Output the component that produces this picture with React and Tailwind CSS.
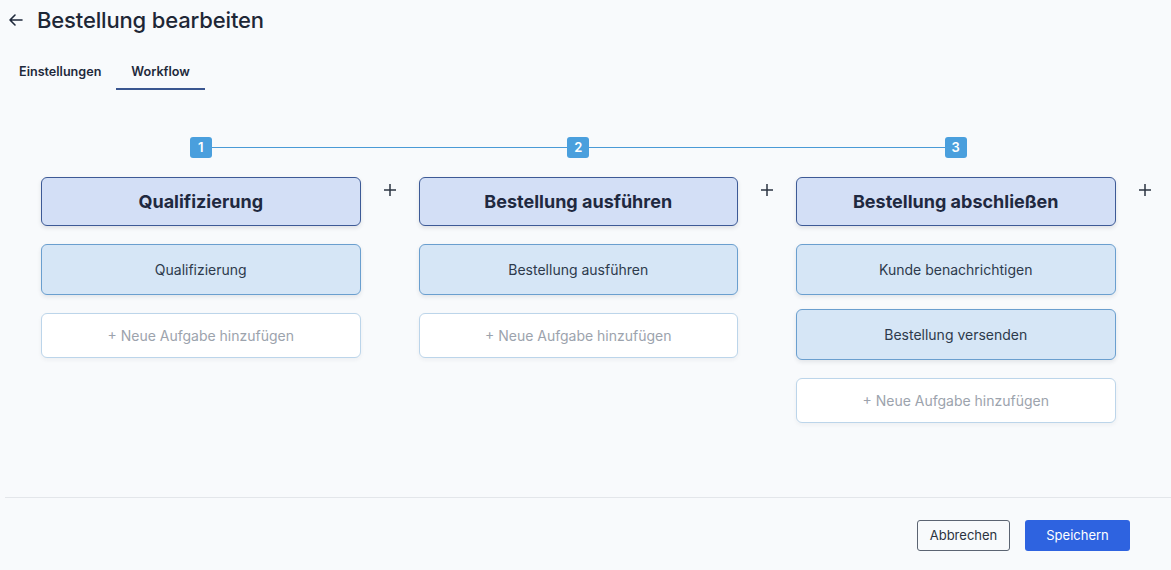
import { useState } from 'react';

const stages = [
  { name: 'Qualifizierung', tasks: ['Qualifizierung'] },
  { name: 'Bestellung ausführen', tasks: ['Bestellung ausführen'] },
  { name: 'Bestellung abschließen', tasks: ['Kunde benachrichtigen', 'Bestellung versenden'] },
];

function PlusIcon() {
  return (
    <svg className="w-[14px] h-[14px]" viewBox="0 0 14 14" fill="none" stroke="#2b3441" strokeWidth={1.5}>
      <path d="M7 1v12M1 7h12" />
    </svg>
  );
}

export default function App() {
  const [tab, setTab] = useState('workflow');

  return (
    <div
      className="w-[1171px] h-[570px] bg-[#f8fafc] overflow-hidden flex flex-col text-[#1e293b]"
      style={{ fontFamily: 'Inter, "Noto Sans", sans-serif' }}
    >
      {/* Header */}
      <div className="h-[40px] flex items-center gap-[14px] pl-[8px]">
        <svg className="w-[16px] h-[16px]" viewBox="0 0 16 16" fill="none" stroke="#1e293b" strokeWidth={1.6} strokeLinecap="round" strokeLinejoin="round">
          <path d="M14 8H2M7 3L2 8l5 5" />
        </svg>
        <h1 className="text-[22px] font-medium tracking-[-0.15px] text-[#1e2736] -ml-[1px]">Bestellung bearbeiten</h1>
      </div>

      {/* Tabs */}
      <div className="mt-[16px] pl-[4px] flex">
        <button
          onClick={() => setTab('settings')}
          className={`h-[34px] px-[15px] text-[12.6px] font-semibold text-[#1e293b] border-b-2 ${tab === 'settings' ? 'border-[#3a5690]' : 'border-transparent'}`}
        >
          Einstellungen
        </button>
        <button
          onClick={() => setTab('workflow')}
          className={`h-[34px] px-[15px] text-[12.6px] font-semibold text-[#1e293b] border-b-2 ${tab === 'workflow' ? 'border-[#3a5690]' : 'border-transparent'}`}
        >
          Workflow
        </button>
      </div>

      {/* Steps */}
      <div className="mt-[47px] pl-[41px] flex items-center">
        {stages.map((s, i) => (
          <div key={i} className="flex items-center">
            <div className="w-[319.5px] flex items-center">
              <div className={`flex-1 h-px ${i === 0 ? 'bg-transparent' : 'bg-[#4a9ad6]'}`} />
              <div className="w-[22px] h-[21px] rounded-[3px] bg-[#4a9fdd] text-white text-[13px] font-semibold flex items-center justify-center">
                {i + 1}
              </div>
              <div className={`flex-1 h-px ${i === stages.length - 1 ? 'bg-transparent' : 'bg-[#4a9ad6]'}`} />
            </div>
            <div className={`w-[58px] h-px ${i === stages.length - 1 ? 'bg-transparent' : 'bg-[#4a9ad6]'}`} />
          </div>
        ))}
      </div>

      {/* Columns */}
      <div className="mt-[19px] pl-[41px] flex items-start">
        {stages.map((s, i) => (
          <div key={i} className="flex items-start">
            <div className="w-[319.5px] flex flex-col">
              <div className="h-[49px] rounded-[6px] border border-[#3d5a96] bg-[#d3dff6] shadow-[0_2px_4px_rgba(30,41,59,0.12)] flex items-center justify-center text-[18px] font-bold text-[#1f2940]">
                {s.name}
              </div>
              <div className="mt-[18px] flex flex-col gap-[14px]">
                {s.tasks.map((t) => (
                  <div
                    key={t}
                    className="h-[51px] rounded-[6px] border border-[#6a9fcf] bg-[#d6e6f6] shadow-[0_2px_4px_rgba(30,41,59,0.10)] flex items-center justify-center text-[14px] text-[#2d3a4c]"
                  >
                    {t}
                  </div>
                ))}
              </div>
              <div className="mt-[18px] h-[45px] rounded-[6px] border border-[#bcd5ea] bg-white shadow-[0_2px_4px_rgba(30,41,59,0.05)] flex items-center justify-center text-[14px] text-[#9ca3ad]">
                + Neue Aufgabe hinzufügen
              </div>
            </div>
            <div className="w-[58px] flex justify-center pt-[6px]">
              <PlusIcon />
            </div>
          </div>
        ))}
      </div>

      <div className="flex-1" />

      {/* Footer */}
      <div className="ml-[5px] border-t border-[#e3e6ea] pt-[22px] pb-[19px] pr-[41px] flex justify-end gap-[15px]">
        <button className="w-[93px] h-[31px] rounded-[3px] border border-[#5b6472] bg-[#f8fafc] text-[13px] text-[#2b3340]">
          Abbrechen
        </button>
        <button className="w-[105px] h-[31px] rounded-[3px] bg-[#2e63e0] text-[13px] text-white">
          Speichern
        </button>
      </div>
    </div>
  );
}
